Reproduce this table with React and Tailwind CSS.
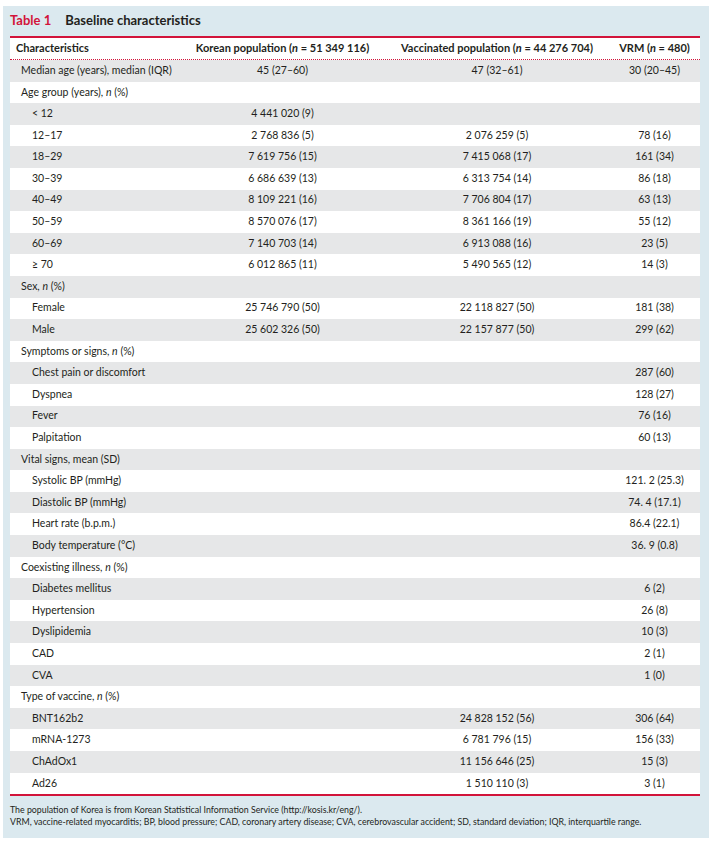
import React from 'react';

const N = () => <span className="italic">n</span>;

const rows = [
    { label: 'Median age (years), median (IQR)', k: '45 (27–60)', v: '47 (32–61)', r: '30 (20–45)' },
    { label: <>Age group (years), <N /> (%)</> },
    { label: '< 12', sub: true, k: '4 441 020 (9)' },
    { label: '12–17', sub: true, k: '2 768 836 (5)', v: '2 076 259 (5)', r: '78 (16)' },
    { label: '18–29', sub: true, k: '7 619 756 (15)', v: '7 415 068 (17)', r: '161 (34)' },
    { label: '30–39', sub: true, k: '6 686 639 (13)', v: '6 313 754 (14)', r: '86 (18)' },
    { label: '40–49', sub: true, k: '8 109 221 (16)', v: '7 706 804 (17)', r: '63 (13)' },
    { label: '50–59', sub: true, k: '8 570 076 (17)', v: '8 361 166 (19)', r: '55 (12)' },
    { label: '60–69', sub: true, k: '7 140 703 (14)', v: '6 913 088 (16)', r: '23 (5)' },
    { label: '≥ 70', sub: true, k: '6 012 865 (11)', v: '5 490 565 (12)', r: '14 (3)' },
    { label: <>Sex, <N /> (%)</> },
    { label: 'Female', sub: true, k: '25 746 790 (50)', v: '22 118 827 (50)', r: '181 (38)' },
    { label: 'Male', sub: true, k: '25 602 326 (50)', v: '22 157 877 (50)', r: '299 (62)' },
    { label: <>Symptoms or signs, <N /> (%)</> },
    { label: 'Chest pain or discomfort', sub: true, r: '287 (60)' },
    { label: 'Dyspnea', sub: true, r: '128 (27)' },
    { label: 'Fever', sub: true, r: '76 (16)' },
    { label: 'Palpitation', sub: true, r: '60 (13)' },
    { label: 'Vital signs, mean (SD)' },
    { label: 'Systolic BP (mmHg)', sub: true, r: '121. 2 (25.3)' },
    { label: 'Diastolic BP (mmHg)', sub: true, r: '74. 4 (17.1)' },
    { label: 'Heart rate (b.p.m.)', sub: true, r: '86.4 (22.1)' },
    { label: 'Body temperature (°C)', sub: true, r: '36. 9 (0.8)' },
    { label: <>Coexisting illness, <N /> (%)</> },
    { label: 'Diabetes mellitus', sub: true, r: '6 (2)' },
    { label: 'Hypertension', sub: true, r: '26 (8)' },
    { label: 'Dyslipidemia', sub: true, r: '10 (3)' },
    { label: 'CAD', sub: true, r: '2 (1)' },
    { label: 'CVA', sub: true, r: '1 (0)' },
    { label: <>Type of vaccine, <N /> (%)</> },
    { label: 'BNT162b2', sub: true, v: '24 828 152 (56)', r: '306 (64)' },
    { label: 'mRNA-1273', sub: true, v: '6 781 796 (15)', r: '156 (33)' },
    { label: 'ChAdOx1', sub: true, v: '11 156 646 (25)', r: '15 (3)' },
    { label: 'Ad26', sub: true, v: '1 510 110 (3)', r: '3 (1)' },
];

const App = () => {
    return (
        <div className="min-h-screen bg-white pt-[6px] pl-[3px] font-['Lato',sans-serif] text-[#231f20]">
            <div className="w-[706px] h-[832px] bg-[#dbe9ef] pl-[7px] pr-[9px]">
                <div className="h-[30px] flex items-center gap-[14px] text-[13px] font-bold">
                    <span className="text-[#d2143a]">Table 1</span>
                    <span>Baseline characteristics</span>
                </div>

                <div className="bg-white border-t-2 border-b-2 border-[#d2143a] text-[10.5px]">
                    <div className="grid grid-cols-[170px_205px_224px_91px] h-[22px] items-center text-[11px] font-bold border-b border-dotted border-[#d2143a]">
                        <div className="pl-[6px]">Characteristics</div>
                        <div className="text-center">Korean population (<N /> = 51 349 116)</div>
                        <div className="text-center">Vaccinated population (<N /> = 44 276 704)</div>
                        <div className="text-center">VRM (<N /> = 480)</div>
                    </div>
                    {rows.map((row, i) => (
                        <div
                            key={i}
                            className={`grid grid-cols-[170px_205px_224px_91px] h-[21.6px] items-center ${i % 2 === 0 ? 'bg-[#e6e7e8]' : 'bg-white'}`}
                        >
                            <div className={row.sub ? 'pl-[22px]' : 'pl-[11px]'}>{row.label}</div>
                            <div className="text-center">{row.k}</div>
                            <div className="text-center">{row.v}</div>
                            <div className="text-center">{row.r}</div>
                        </div>
                    ))}
                </div>

                <div className="pt-[8px] text-[8.8px] leading-[11.5px]">
                    <p>The population of Korea is from Korean Statistical Information Service (http://kosis.kr/eng/).</p>
                    <p>VRM, vaccine-related myocarditis; BP, blood pressure; CAD, coronary artery disease; CVA, cerebrovascular accident; SD, standard deviation; IQR, interquartile range.</p>
                </div>
            </div>
        </div>
    );
};

export default App;
